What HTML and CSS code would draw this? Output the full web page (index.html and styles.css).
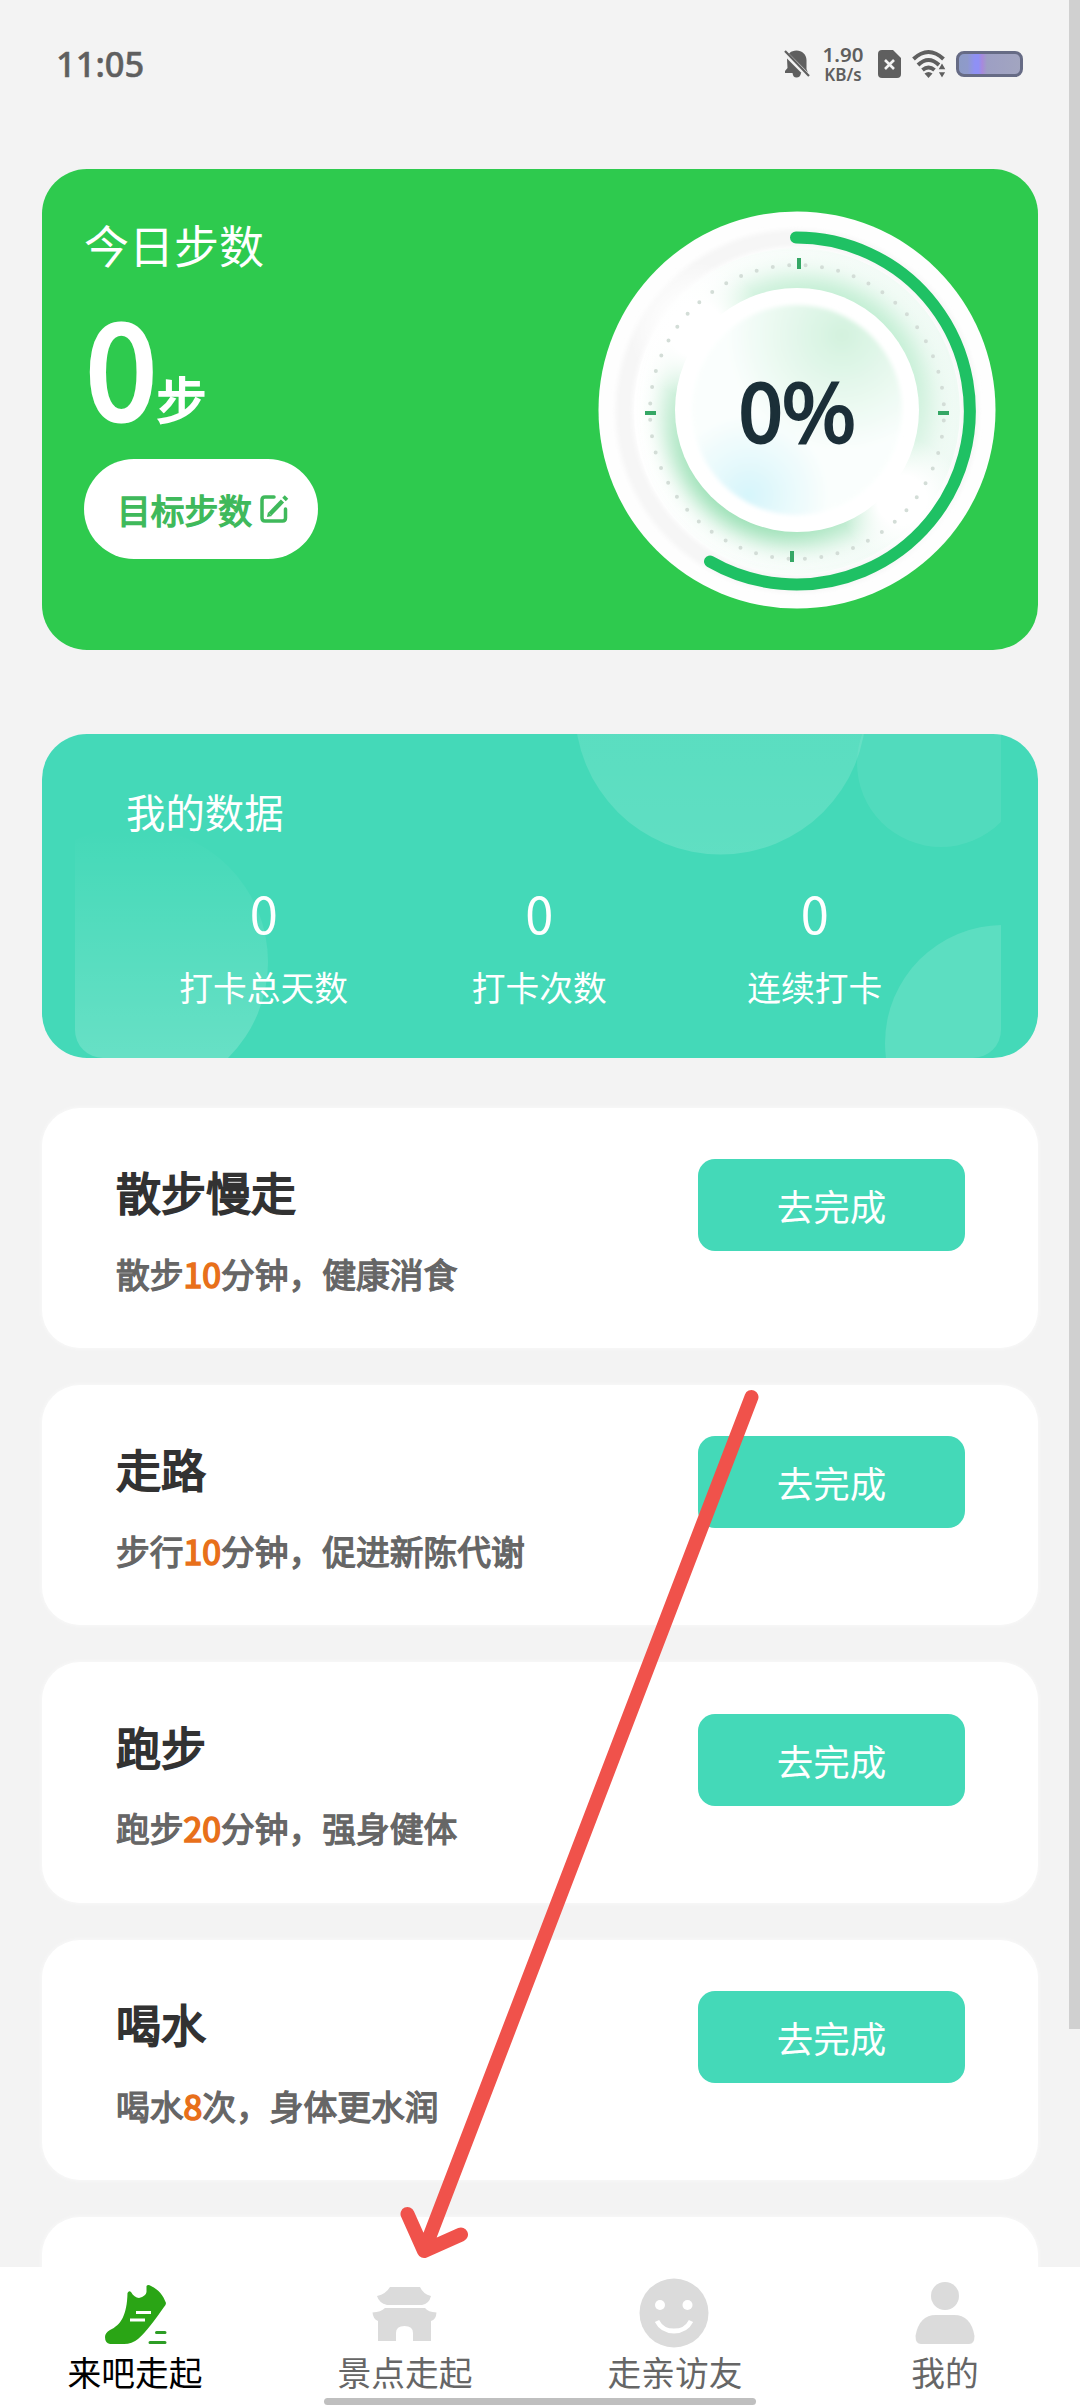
FILE: index.html
```html
<!DOCTYPE html>
<html lang="zh-CN">
<head>
<meta charset="utf-8">
<title>来吧走起</title>
<link rel="stylesheet" href="styles.css">
</head>
<body>
<div class="app">
  <header class="status">
    <span class="clock">11:05</span>
    <div class="status-icons">
      <svg class="bell" width="26" height="28" viewBox="0 0 26 28"><path d="M3 9C3 4 7 .5 12.500 .5S22.500 4.500 22.500 10V19L24 23H17C16.500 26 15 27.500 12.500 27.500S9 26 8.500 23H1V21L3.500 18Z" fill="#5f5f5f"/><path d="M-.5 1.500 25.500 27.500" stroke="#f3f3f3" stroke-width="5"/><path d="M1 1 25 26" stroke="#5f5f5f" stroke-width="2.200"/></svg>
      <div class="net"><b>1.90</b><span>KB/s</span></div>
      <svg class="sim" width="23" height="28" viewBox="0 0 23 28"><path d="M4 0H15L23 8V24Q23 28 19 28H4Q0 28 0 24V4Q0 0 4 0Z" fill="#5f5f5f"/><path d="M7 10 16 19M16 10 7 19" stroke="#f3f3f3" stroke-width="2.600"/></svg>
      <svg class="wifi" width="34" height="28" viewBox="0 0 34 28"><g fill="none" stroke="#5f5f5f" stroke-width="4"><path d="M1.500 9Q16.500 -5 31.500 9"/><path d="M6 15Q16.500 5 27 15"/><path d="M10.500 20Q16.500 15 22.500 20"/></g><path d="M12.500 23.500Q16.500 20.500 20.500 23.500L16.500 28Z" fill="#5f5f5f"/><path d="M30 12 34.500 20H25.500ZM25.500 21.500H34.500L30 29Z" fill="#5f5f5f" stroke="#f3f3f3" stroke-width="1.500"/></svg>
      <span class="battery"></span>
    </div>
  </header>

  <main class="content">
    <section class="steps">
      <div class="steps-info">
        <h2>今日步数</h2>
        <p class="count"><span class="num">0</span><span class="unit">步</span></p>
        <button class="goal">目标步数
          <svg width="28" height="28" viewBox="0 0 28 28" fill="none" stroke="#3fb95b" stroke-width="3.500"><path d="M14 2H5Q2 2 2 5V23Q2 26 5 26H22.500Q25.500 26 25.500 23V14" stroke-linecap="round"/><path d="M10 19 22.500 6" stroke-width="4.500"/><path d="M8 17 7 22 12 21Z" fill="#3fb95b" stroke="none"/><path d="M23.500 1.500 27 5" stroke-width="3.500"/></svg>
        </button>
      </div>
      <div class="dial">
        <svg width="398" height="398" viewBox="-199 -199 398 398">
          <defs>
            <linearGradient id="halo" x1=".8" y1="0" x2=".2" y2="1"><stop offset="0" stop-color="#b4ebc9"/><stop offset=".5" stop-color="#e2f6ea"/><stop offset="1" stop-color="#7fd8a1"/></linearGradient>
            <radialGradient id="mint"><stop offset="0" stop-color="#d3f2de"/><stop offset="1" stop-color="#d3f2de" stop-opacity="0"/></radialGradient>
            <radialGradient id="aqua"><stop offset="0" stop-color="#d6f5fb"/><stop offset="1" stop-color="#d6f5fb" stop-opacity="0"/></radialGradient>
            <linearGradient id="band" x1="0" y1="0" x2="1" y2="0"><stop offset="0" stop-color="#fff"/><stop offset="1" stop-color="#effaf4"/></linearGradient>
            <radialGradient id="wash"><stop offset="0" stop-color="#fff"/><stop offset=".4" stop-color="#fff"/><stop offset="1" stop-color="#fff" stop-opacity="0"/></radialGradient>
            <filter id="soft" x="-30%" y="-30%" width="160%" height="160%"><feGaussianBlur stdDeviation="11"/></filter>
            <filter id="edge" x="-10%" y="-10%" width="120%" height="120%"><feGaussianBlur stdDeviation="2"/></filter>
            <clipPath id="disc"><circle r="105"/></clipPath>
          </defs>
          <circle r="198.500" fill="#fefefe"/>
          <circle cy="1" r="173" fill="none" stroke="#f6f6f6" stroke-width="17" filter="url(#edge)"/>
          <circle cy="1" r="163" fill="url(#band)"/>
          <circle r="134" fill="url(#halo)" filter="url(#soft)"/>
          <circle cx="-100" cy="-80" r="68" fill="url(#wash)"/>
          <circle cx="105" cy="90" r="62" fill="url(#wash)"/>
          <circle cy="2" r="147" fill="none" stroke="#d3ddd7" stroke-width="4" stroke-linecap="round" stroke-dasharray="0 16.490" stroke-dashoffset="8"/>
          <g fill="#35a765"><rect x="0" y="-152" width="4" height="11"/><rect x="-7" y="141" width="4" height="11"/><rect x="-152" y="1" width="11" height="4"/><rect x="141" y="1" width="11" height="4"/></g>
          <circle r="122" fill="#fff"/>
          <g filter="url(#edge)"><g clip-path="url(#disc)">
            <circle r="105" fill="#fafefd"/>
            <circle cx="45" cy="-75" r="115" fill="url(#mint)"/>
            <circle cx="-48" cy="85" r="80" fill="url(#aqua)"/>
          </g></g>
          <path d="M-1 -172.500A173.500 173.500 0 1 1 -87 151.500" fill="none" stroke="#1fc164" stroke-width="12" stroke-linecap="round"/>
        </svg>
        <strong>0%</strong>
      </div>
    </section>

    <section class="data">
      <svg class="bubbles" width="926" height="324" viewBox="75 734 926 324">
        <defs>
          <linearGradient id="g1" x1="0" y1="0" x2="0" y2="1"><stop offset="0" stop-color="#fff" stop-opacity=".08"/><stop offset="1" stop-color="#fff" stop-opacity=".15"/></linearGradient>
          <linearGradient id="g2" x1="0" y1="0" x2="0" y2="1"><stop offset="0" stop-color="#fff" stop-opacity="0"/><stop offset="1" stop-color="#fff" stop-opacity=".22"/></linearGradient>
        </defs>
        <circle cx="720.500" cy="709" r="145.500" fill="url(#g1)"/>
        <circle cx="941" cy="763" r="84" fill="#fff" fill-opacity=".07"/>
        <circle cx="133" cy="962" r="135" fill="url(#g2)"/>
        <circle cx="1003" cy="1043" r="118" fill="#fff" fill-opacity=".13"/>
      </svg>
      <h2>我的数据</h2>
      <div class="stats">
        <div><b>0</b><span>打卡总天数</span></div>
        <div><b>0</b><span>打卡次数</span></div>
        <div><b>0</b><span>连续打卡</span></div>
      </div>
    </section>

    <section class="tasks">
      <article class="task"><div><h3>散步慢走</h3><p>散步<em>10</em>分钟，健康消食</p></div><button>去完成</button></article>
      <article class="task"><div><h3>走路</h3><p>步行<em>10</em>分钟，促进新陈代谢</p></div><button>去完成</button></article>
      <article class="task"><div><h3>跑步</h3><p>跑步<em>20</em>分钟，强身健体</p></div><button>去完成</button></article>
      <article class="task"><div><h3>喝水</h3><p>喝水<em>8</em>次，身体更水润</p></div><button>去完成</button></article>
      <article class="task"></article>
    </section>
  </main>

  <nav class="tabs">
    <a class="tab active">
      <svg width="72" height="72" viewBox="-3 1 72 72"><path d="M25.500 25Q27 22 29 24C31 27.500 34 30 37 30Q44 28 44.500 24V18Q46 16 49 18C57 22 61 27 64 35Q64 37 62 39C53 52 44 64 36 71Q30 76 22 76H8Q3 75 3 69Q3 65 8 62C19 57 25 47 25.500 25Z" fill="#2aa515"/><path d="M34 44.500H49M28 52H43" stroke="#fff" stroke-width="2.800"/><path d="M54.500 64.500H63M48 74.500H63" stroke="#2d9d25" stroke-width="3" stroke-linecap="round"/></svg>
      <span>来吧走起</span>
    </a>
    <a class="tab">
      <svg width="72" height="72" viewBox="0 0 72 72" fill="#dbdbdb"><path d="M21 18H51Q54 25 62 27Q60 35 53 36H18Q10 34 8 27Q17 25 21 18Z"/><path d="M16 39H56Q59 43 67.500 43.500Q67 51 62 52V72H44V64Q44 57 35.500 57T27 64V72H9V52Q4 50 3.500 43.500Q12 43 16 39Z"/></svg>
      <span>景点走起</span>
    </a>
    <a class="tab">
      <svg width="72" height="72" viewBox="0 0 72 72"><circle cx="35" cy="44" r="34.500" fill="#dbdbdb"/><circle cx="21" cy="36" r="5" fill="#fff"/><circle cx="48.500" cy="36" r="5" fill="#fff"/><path d="M18 52Q23 62 35 62T52 52" fill="none" stroke="#fff" stroke-width="4.800"/></svg>
      <span>走亲访友</span>
    </a>
    <a class="tab">
      <svg width="72" height="72" viewBox="0 0 72 72" fill="#dbdbdb"><circle cx="36" cy="27" r="14"/><path d="M27 46H45Q62 46 65.500 67Q65.500 75 60 75H12Q6.500 75 6.500 67Q10 46 27 46Z"/></svg>
      <span>我的</span>
    </a>
  </nav>

  <svg class="arrow" width="380" height="880" viewBox="390 1385 380 880"><path d="M751.500 1397 424 2251M407.500 2214 424 2251 461 2234.500" fill="none" stroke="#f0524b" stroke-width="14" stroke-linecap="round" stroke-linejoin="round"/></svg>
  <span class="scrollbar"></span>
  <span class="home-bar"></span>
</div>
</body>
</html>
```
FILE: styles.css
```css
* { box-sizing: border-box; margin: 0; padding: 0; }
body { width: 1080px; height: 2408px; overflow: hidden; background: #f3f3f3; font-family: "Noto Sans CJK SC", sans-serif; }
button { border: 0; font: inherit; }
svg { display: block; overflow: visible; }
h2 { font-weight: 400; }
.app { position: relative; display: flex; flex-direction: column; height: 2408px; overflow: hidden; }

.status { display: flex; justify-content: space-between; align-items: center; height: 128px; padding: 0 57px 0 56px; font-family: "Noto Sans", sans-serif; color: #5f5f5f; }
.clock { font-size: 34.500px; font-weight: 500; line-height: 40px; -webkit-text-stroke: .5px; }
.status-icons { display: flex; align-items: center; }
.net { display: flex; flex-direction: column; align-items: center; width: 42px; margin: 0 14px 0 12px; }
.net b { font-size: 20.500px; font-weight: 600; line-height: 21px; }
.net span { font-size: 17px; font-weight: 600; line-height: 20px; }
.sim { margin-right: 11px; }
.wifi { margin-right: 10px; }
.battery { width: 67px; height: 26px; border: 3px solid #666b85; border-radius: 8px; background: linear-gradient(90deg, #8d9bc6 0, #8f9acb 14%, #8f90f5 26%, #8f90f5 32%, #a889dc 38%, #9d9fc4 46%, #a2a5c0 100%); }

.content { flex: 1; min-height: 0; overflow: hidden; padding: 41px 42px 0; }

.steps { display: flex; justify-content: space-between; height: 481px; padding: 42px 42px 0; border-radius: 45px; background: #2eca4e; color: #fff; }
.steps-info h2 { padding-top: 1px; font-size: 45px; line-height: 65px; }
.count { display: flex; align-items: baseline; height: 182px; padding-left: 2px; }
.num { font-size: 127px; line-height: 175px; -webkit-text-stroke: 5px; }
.unit { font-size: 50px; -webkit-text-stroke: 2.200px; }
.goal { display: flex; align-items: center; gap: 8px; width: 234px; height: 100px; padding-left: 33px; border-radius: 50px; background: #fff; color: #3fb95b; font-size: 33.750px; -webkit-text-stroke: 1.400px; }
.dial { display: grid; place-items: center; width: 398px; height: 398px; }
.dial > * { grid-area: 1 / 1; }
.dial strong { padding-bottom: 5px; color: #1b2f38; font-size: 79px; font-weight: 400; line-height: 100px; -webkit-text-stroke: 3px; }

.data { position: relative; height: 324px; margin-top: 84px; padding: 48px 84px 0; border-radius: 45px; background: #44d9b8; color: #fff; }
.bubbles { position: absolute; left: 33px; top: 0; overflow: hidden; border-radius: 0 0 28px 28px; }
.data h2 { position: relative; font-size: 39.400px; line-height: 57px; }
.stats { position: relative; display: grid; grid-template-columns: repeat(3, 275.500px); margin-top: 38px; }
.stats div { display: flex; flex-direction: column; align-items: center; }
.stats b { font-size: 50.600px; font-weight: 400; line-height: 70px; }
.stats span { padding-top: 4px; font-size: 33.750px; line-height: 72px; }

.tasks { display: flex; flex-direction: column; gap: 36.900px; margin-top: 49.500px; }
.task { flex: none; display: flex; justify-content: space-between; height: 240.500px; padding: 51.500px 73px 0 74px; border-radius: 38px; background: #fff; box-shadow: 0 0 5px rgba(255,255,255,.7); }
.task h3 { color: #323232; font-size: 45px; font-weight: 400; line-height: 65px; -webkit-text-stroke: 1.900px; }
.task p { margin-top: 24.500px; color: #666; font-size: 33.750px; line-height: 50px; -webkit-text-stroke: 1.300px; }
.task em { color: #e8701a; font-style: normal; -webkit-text-stroke: 1.700px; }
.task button { width: 267px; height: 92px; border-radius: 17px; background: #44d9b8; color: #fff; font-size: 36.500px; line-height: 94px; }

.tabs { display: grid; grid-template-columns: repeat(4, 1fr); height: 141px; padding-top: 2px; background: #fff; }
.tab { display: flex; flex-direction: column; align-items: center; color: #666; font-size: 33.750px; line-height: 50px; }
.tab span { margin-top: 6px; }
.tab.active { color: #000; }

.arrow { position: absolute; left: 390px; top: 1385px; }
.scrollbar { position: absolute; right: 0; top: 0; width: 11px; height: 2029px; background: #d0d0d0; }
.home-bar { position: absolute; left: 324px; bottom: 3px; width: 432px; height: 7px; border-radius: 4px; background: #bfbfbf; }
```
